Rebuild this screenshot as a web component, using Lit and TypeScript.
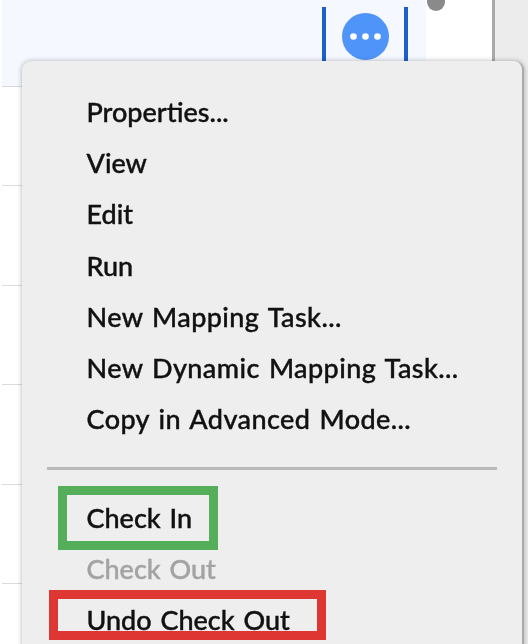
import { LitElement, html, css } from "lit";
import { customElement } from "lit/decorators.js";

@customElement("app-root")
export class AppRoot extends LitElement {
  static styles = css`
    :host {
      display: block;
      position: relative;
      width: 528px;
      height: 644px;
      overflow: hidden;
      background: #ececec;
      font-family: "Lato", "Noto Sans", sans-serif;
    }
    .page {
      display: flex;
      height: 100%;
      filter: blur(0.45px);
    }
    .panel {
      width: 489.5px;
      height: 100%;
      background: #fff;
      border-right: 3px solid #a9a9a9;
      display: flex;
      flex-direction: column;
      padding-left: 2px;
    }
    .selected {
      height: 86px;
      flex: none;
      display: flex;
      align-items: flex-start;
      border-bottom: 1px solid #d8d8d8;
    }
    .selected-fill {
      width: 424px;
      height: 100%;
      background: #f5f9ff;
      display: flex;
      justify-content: flex-end;
      padding: 7px 18px 0 0;
      box-sizing: border-box;
    }
    .action {
      width: 86px;
      height: 58px;
      box-sizing: border-box;
      border-left: 4px solid #1f5fc8;
      border-right: 4px solid #1f5fc8;
      display: flex;
      align-items: center;
      justify-content: center;
    }
    .thumb {
      width: 18px;
      height: 11px;
      background: #8a8a8a;
      border-radius: 0 0 9px 9px;
      margin-left: 1px;
    }
    .row {
      height: 98.4px;
      flex: none;
      border-bottom: 1px solid #dcdcdc;
    }
    .menu {
      position: absolute;
      left: 22px;
      top: 61px;
      width: 502px;
      height: 600px;
      box-sizing: border-box;
      background: #eeeeee;
      border-radius: 9px;
      border-right: 2px solid #ababab;
      box-shadow: 0 0 5px rgba(0, 0, 0, 0.3);
      padding: 25px 0 0 25px;
      filter: blur(0.4px);
    }
    .item {
      height: 51.2px;
      padding-left: 39.5px;
      font-size: 27px;
      font-weight: 500;
      line-height: 51.2px;
      word-spacing: 2px;
      color: #111;
      white-space: nowrap;
      -webkit-text-stroke: 0.4px currentColor;
    }
    .item.long {
      letter-spacing: 0.4px;
    }
    .item.off {
      color: #a3a3a3;
    }
    .sep {
      height: 3px;
      background: #b9b9b9;
      margin: 22.5px 25px 22px 0;
    }
    .mark {
      position: absolute;
      box-sizing: border-box;
      border: 9px solid;
    }
    .green {
      left: 58px;
      top: 486px;
      width: 160px;
      height: 64px;
      border-color: #55ae5a;
    }
    .red {
      left: 49px;
      top: 590px;
      width: 277px;
      height: 50px;
      border-color: #de3632;
    }
  `;

  render() {
    const top = [
      { t: "Properties...", c: "" },
      { t: "View", c: "" },
      { t: "Edit", c: "" },
      { t: "Run", c: "" },
      { t: "New Mapping Task...", c: "long" },
      { t: "New Dynamic Mapping Task...", c: "long" },
      { t: "Copy in Advanced Mode...", c: "long" },
    ];
    return html`
      <div class="page">
        <div class="panel">
          <div class="selected">
            <div class="selected-fill">
              <div class="action">
                <svg width="47" height="47" viewBox="0 0 47 47">
                  <circle cx="23.5" cy="23.5" r="23.5" fill="#4f94f8"></circle>
                  <circle cx="11.5" cy="23.5" r="3.3" fill="#fff"></circle>
                  <circle cx="23.5" cy="23.5" r="3.3" fill="#fff"></circle>
                  <circle cx="35.5" cy="23.5" r="3.3" fill="#fff"></circle>
                </svg>
              </div>
            </div>
            <div class="thumb"></div>
          </div>
          ${[0, 1, 2, 3, 4, 5].map(() => html`<div class="row"></div>`)}
        </div>
      </div>
      <div class="menu">
        ${top.map((i) => html`<div class="item ${i.c}">${i.t}</div>`)}
        <div class="sep"></div>
        <div class="item">Check In</div>
        <div class="item off">Check Out</div>
        <div class="item">Undo Check Out</div>
      </div>
      <div class="mark green"></div>
      <div class="mark red"></div>
    `;
  }
}
